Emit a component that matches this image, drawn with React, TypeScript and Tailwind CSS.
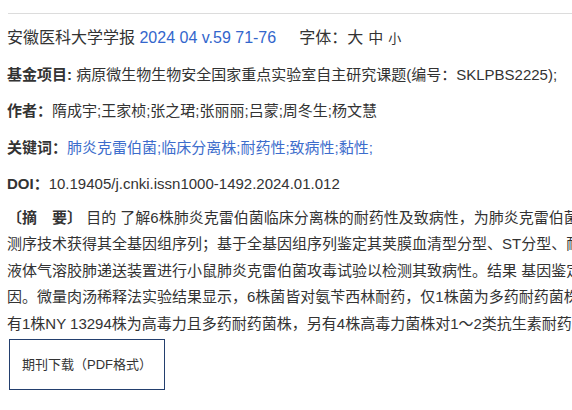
import React from "react";

const abstractLines = [
  "了解6株肺炎克雷伯菌临床分离株的耐药性及致病性，为肺炎克雷伯菌感染的防控提供依据。",
  "测序技术获得其全基因组序列；基于全基因组序列鉴定其荚膜血清型分型、ST分型、耐药基因和毒力基因；",
  "液体气溶胶肺递送装置进行小鼠肺炎克雷伯菌攻毒试验以检测其致病性。结果 基因鉴定显示6株菌",
  "因。微量肉汤稀释法实验结果显示，6株菌皆对氨苄西林耐药，仅1株菌为多药耐药菌株。小鼠攻毒",
  "有1株NY 13294株为高毒力且多药耐药菌株，另有4株高毒力菌株对1～2类抗生素耐药。结论",
];

const authors = ["隋成宇", "王家桢", "张之珺", "张丽丽", "吕蒙", "周冬生", "杨文慧"];
const keywords = ["肺炎克雷伯菌", "临床分离株", "耐药性", "致病性", "黏性"];

const App: React.FC = () => {
  return (
    <div className="w-[572px] h-[410px] overflow-hidden bg-white text-[#333] font-['Liberation_Sans','Noto_Sans_CJK_SC',sans-serif]">
      <div className="mt-[13px] ml-2 border-t border-[#dcdcdc]" />

      <div className="pl-[7px]">
        {/* Journal line */}
        <div className="mt-[6px] h-[36.5px] leading-[36.5px] text-[16px] whitespace-nowrap">
          <span>安徽医科大学学报 </span>
          <span className="text-[#3366cc]">2024 04 v.59 71-76</span>
          <span className="ml-[23px]">字体：</span>
          <span className="text-[16px]">大</span>
          <span className="ml-[5px] text-[15px]">中</span>
          <span className="ml-[5px] text-[13px]">小</span>
        </div>

        <div className="h-[36.5px] leading-[36.5px] text-[15px] whitespace-nowrap">
          <span className="font-bold">基金项目: </span>
          <span>病原微生物生物安全国家重点实验室自主研究课题(编号：SKLPBS2225);</span>
        </div>

        <div className="h-[36.5px] leading-[36.5px] text-[15px] whitespace-nowrap">
          <span className="font-bold">作者：</span>
          <span>{authors.join(";")}</span>
        </div>

        <div className="h-[36.5px] leading-[36.5px] text-[15px] whitespace-nowrap">
          <span className="font-bold">关键词：</span>
          {keywords.map((k) => (
            <span key={k} className="text-[#3d6dcc]">
              {k};
            </span>
          ))}
        </div>

        <div className="h-[36.5px] leading-[36.5px] text-[15px] whitespace-nowrap">
          <span className="font-bold">DOI：</span>
          <span>10.19405/j.cnki.issn1000-1492.2024.01.012</span>
        </div>

        {/* Abstract */}
        <div className="mt-[2px] text-[15px] leading-[26.5px] overflow-hidden">
          {abstractLines.map((line, i) => (
            <div key={i} className="whitespace-nowrap">
              {i === 0 && (
                <>
                  <span className="font-bold">〔摘　要〕</span> 目的{" "}
                </>
              )}
              {line}
            </div>
          ))}
        </div>

        <div className="mt-[2px] ml-[2px] w-[156px] h-[51px] border border-[#233f6e] flex items-center pl-[12px] text-[13px] whitespace-nowrap">
          期刊下载（PDF格式）
        </div>
      </div>
    </div>
  );
};

export default App;
